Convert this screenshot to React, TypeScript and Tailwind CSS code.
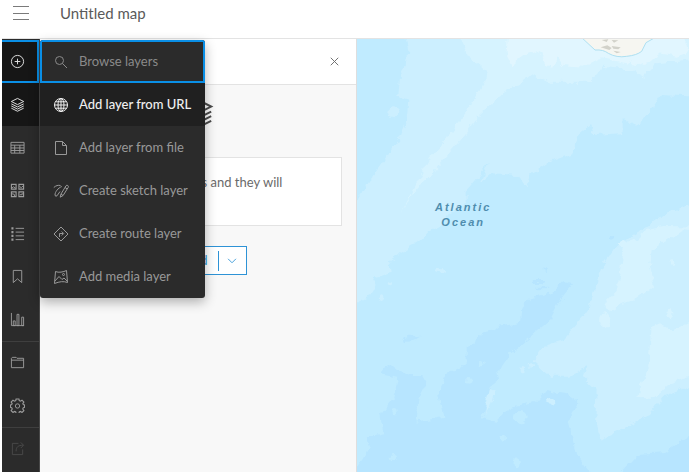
import type { ReactNode } from 'react'
import clsx from 'clsx'

function Icon({ children, className = 'size-4' }: { children: ReactNode; className?: string }) {
  return (
    <svg viewBox="0 0 16 16" fill="none" stroke="currentColor" className={clsx('shrink-0', className)} aria-hidden="true">
      {children}
    </svg>
  )
}

const icons = {
  plus: <><circle cx="8" cy="8" r="6.5" /><path d="M8 5v6M5 8h6" /></>,
  layers: <path d="M8 1.5 14.6 4.800 8 8.100 1.400 4.800ZM1.400 7.300 8 10.600l6.600-3.300M1.400 9.600 8 12.900l6.600-3.300M1.400 11.900 8 15.200l6.600-3.300" />,
  table: <path d="M1 2.500h14v11.500h-14zM1 5.500h14M1 8.500h14M1 11.200h14M5 5.500v8.500M10.500 5.500v8.500" />,
  basemap: (
    <>
      <path strokeWidth="1.2" d="M1.500 1.500h5v5h-5zM9.500 1.500h5v5h-5zM1.500 9.500h5v5h-5zM9.500 9.500h5v5h-5z" />
      <path d="m2 5.500 1.500-1.500L6 5.500M10 3.500 12 5l2-2M2 11.500l2.500.5.5 2M10.500 12.500h2.500v-2" />
    </>
  ),
  legend: (
    <>
      <path d="M6 2.500h9M6 6.500h9M6 10.500h9M6 14.500h9" />
      <path strokeWidth="2.200" d="M1.500 2.500h2.200M1.500 6.500h2.200M1.500 10.500h2.200M1.500 14.500h2.200" />
    </>
  ),
  bookmark: <path d="M3.500 1.500h9v13l-4.500-4-4.500 4z" />,
  charts: <path d="M1.500 1v13.500H15M3.500 9.500h2v5h-2zM7.500 2.500h2v12h-2zM12.500 5.500h2v9h-2z" />,
  folder: <path d="M1.500 13.500v-10l1-1h4l1 1h7v10zM1.500 5.500h13" />,
  gear: (
    <>
      <path
        strokeWidth="1.200"
        d="M6.500 1h3l.4 1.900 1.200.5 1.700-1.100 2 2-1.100 1.700.5 1.100 1.300.4v2.500l-1.400.5-.5 1.200 1.200 1.700-2 2-1.700-1.100-1.200.5-.4 1.700h-3l-.4-1.700-1.200-.5-1.700 1.100-2-2 1.200-1.700-.5-1.200-1.400-.5V7.500l1.300-.4.5-1.100-1.100-1.700 2-2 1.700 1.100 1.200-.5z"
      />
      <circle cx="8" cy="8.500" r="2.300" />
    </>
  ),
  share: <path d="M9 2.500H2.500v12h11V9M6.500 11c0-4.500 2-6.500 7.500-6.500M11.500 1.500l3 3-3 3" />,
  search: <><circle cx="6.500" cy="6.500" r="4" /><path d="m9.500 9.500 4.500 4.500" /></>,
  globe: (
    <>
      <circle cx="8" cy="8" r="6.500" />
      <ellipse cx="8" cy="8" rx="3" ry="6.500" />
      <path d="M8 1.500v13M1.500 8h13M2.500 4.800h11M2.500 11.200h11" />
    </>
  ),
  file: <path d="M2.500 1.500h7l4 4v9h-11zM9.500 1.500v4h4" />,
  sketch: (
    <>
      <path d="M7.200 14.200 8 11l5-8.200q.8-1 1.800-.3t.4 1.900l-5.100 8.100zM12 4.500l2 1.300M8 11l2.100 1.500" />
      <path d="M.8 4.500C3 2.500 5 2 7.500 2.500M8.800 3.500C5 5 2 9 2 12q.3 2 2 .8L7 8.500" />
    </>
  ),
  route: <path d="m8 1 7 7-7 7-7-7zM6.500 11V7.500h3.500M8.700 5.500l2 2-2 2" />,
  media: (
    <>
      <path d="M2.500 2.500c3 1.500 8 .5 11-1l1 12c-4-1.500-8-1-13 1z" />
      <path d="m2 12 4-4.500 3 3 2-1.500 3 3" />
      <circle cx="10.500" cy="5.500" r="1" />
    </>
  ),
  close: <path d="m4 4 8 8M12 4l-8 8" />,
  chevron: <path d="m3.500 5.500 4.500 4.500 4.500-4.500" />,
}

type IconName = keyof typeof icons

const toolGroups: { icon: IconName; label: string; disabled?: boolean }[][] = [
  [
    { icon: 'plus', label: 'Add' },
    { icon: 'layers', label: 'Layers' },
    { icon: 'table', label: 'Tables' },
    { icon: 'basemap', label: 'Basemap' },
    { icon: 'legend', label: 'Legend' },
    { icon: 'bookmark', label: 'Bookmarks' },
    { icon: 'charts', label: 'Charts' },
  ],
  [
    { icon: 'folder', label: 'Save and open' },
    { icon: 'gear', label: 'Map properties' },
  ],
  [{ icon: 'share', label: 'Share map', disabled: true }],
]

const menuItems: { icon: IconName; label: string }[] = [
  { icon: 'search', label: 'Browse layers' },
  { icon: 'globe', label: 'Add layer from URL' },
  { icon: 'file', label: 'Add layer from file' },
  { icon: 'sketch', label: 'Create sketch layer' },
  { icon: 'route', label: 'Create route layer' },
  { icon: 'media', label: 'Add media layer' },
]

function Toolbar() {
  return (
    <nav className="flex w-[38px] shrink-0 flex-col border-r border-[#484848] bg-[#2b2b2b] pt-px">
      {toolGroups.map((group, i) => (
        <div key={i} className={clsx('flex flex-col', i > 0 && 'shadow-[inset_0_1px_#3f3f3f]')}>
          {group.map((tool) => (
            <button
              key={tool.label}
              aria-label={tool.label}
              disabled={tool.disabled}
              className={clsx(
                'flex h-[43px] items-center pl-2',
                tool.label === 'Add' && 'border-y-2 border-r-2 border-[#0a8fe6] bg-[#161616] text-[#e6e6e6]',
                tool.label === 'Layers' && 'bg-[#161616] text-[#e6e6e6]',
                tool.disabled ? 'text-[#4a4a4a]' : 'text-[#9c9c9c]',
              )}
            >
              <Icon className="size-[15px]">{icons[tool.icon]}</Icon>
            </button>
          ))}
        </div>
      ))}
    </nav>
  )
}

function AddMenu() {
  return (
    <div role="menu" className="absolute top-px left-[38px] z-10 w-[165px] overflow-hidden rounded-[3px] bg-[#2b2b2b] shadow-[0_4px_12px_rgba(0,0,0,0.3)]">
      {menuItems.map((item, i) => (
        <button
          key={item.label}
          role="menuitem"
          className={clsx(
            'flex h-[43px] w-full items-center gap-2.5 pl-[13px] text-left text-[13px] whitespace-nowrap',
            i === 0 && 'text-[#8a8a8a] outline-2 -outline-offset-2 outline-[#0a8fe6]',
            i === 1 && 'bg-[#202020] font-medium text-[#f0f0f0]',
            i > 1 && 'text-[#999]',
          )}
        >
          <Icon>{icons[item.icon]}</Icon>
          {item.label}
        </button>
      ))}
    </div>
  )
}

function LayersPanel() {
  return (
    <aside aria-label="Layers" className="flex w-[317px] shrink-0 flex-col border-r border-[#dedede] bg-[#f8f8f8]">
      <div className="flex h-[46px] items-center justify-end border-b border-[#e3e3e3] bg-white pr-3.5">
        <button aria-label="Close" className="text-[#6a6a6a]">
          <Icon className="size-[15px]">{icons.close}</Icon>
        </button>
      </div>
      <div className="flex flex-col items-center px-3.5 pt-3">
        <Icon className="size-8 text-[#4a4a4a]">{icons.layers}</Icon>
        <p className="mt-7 h-[69px] w-full border border-[#e3e3e3] bg-white px-2.5 pt-3.5 text-[13px] leading-5 text-[#6a6a6a]">
          To get started, add layers and they will
        </p>
        <div className="mt-5 flex h-[29px] w-[97px] items-center border border-[#2e93d6] bg-white text-[13px] text-[#2e93d6]">
          <button className="flex flex-1 items-center justify-end gap-2 pr-2.5">
            <Icon className="size-3.5">{icons.plus}</Icon>
            Add
          </button>
          <button aria-label="More add options" className="flex h-5 w-7 items-center justify-center border-l border-[#2e93d6]">
            <Icon className="size-3.5">{icons.chevron}</Icon>
          </button>
        </div>
      </div>
    </aside>
  )
}

function OceanMap() {
  return (
    <main className="relative min-w-0 flex-1 overflow-hidden bg-[#c0ebff]">
      <svg viewBox="21 27 997 1299" preserveAspectRatio="xMinYMin slice" className="block size-full" aria-hidden="true">
        <defs>
          {/* roughens the depth contours */}
          <filter id="rough" x="-5%" y="-5%" width="110%" height="110%" colorInterpolationFilters="sRGB">
            <feTurbulence type="fractalNoise" baseFrequency="0.04" numOctaves="3" seed="4" />
            <feDisplacementMap in="SourceGraphic" scale="24" xChannelSelector="R" yChannelSelector="G" />
          </filter>
        </defs>
        <g filter="url(#rough)">
          <g fill="#ccefff">
            <path d="M160 0 175 60 170 110 150 140 145 200 175 210 170 270 150 320 110 380 60 450 0 545V825L60 795 80 765 65 740 125 725 120 690 180 650 215 630 240 600 280 580 300 550 350 520 350 480 420 395 385 465 430 430 500 435 530 475 550 430 600 395 670 370 680 320 720 285 735 315 815 310 815 265 860 285 890 260 930 195 1050 200V0Z" />
            <path d="M1050 515 960 545 890 590 840 620 800 650 760 700 740 750 720 830 700 860 640 930 590 945 550 995 600 1040 660 1040 710 1010 700 1040 740 1080 735 1180 755 1235 800 1200 900 1155 940 1100 1050 1055Z" />
          </g>
          <g fill="#d6f3ff">
            <path d="M315 0 355 80 410 125 405 155 350 240 290 325 240 385 200 460 150 555 190 490 250 425 340 320 390 255 460 190 540 135 600 155 720 155 760 110 850 120 880 140 920 100 1050 85V0Z" />
            <path d="M1050 608 1000 600 950 630 905 660 900 710 915 765 890 785 850 815 810 825 780 845 765 815 800 780 810 740 820 670 800 640 860 630 900 595 940 588 1050 590Z" />
            <path d="M905 890 930 880 970 900 1050 860V1030L960 1060 910 1105 865 1100 870 1070 895 1010 900 940Z" />
            <ellipse cx="764" cy="871" rx="17" ry="24" />
            <ellipse cx="961" cy="853" rx="9" ry="15" />
            <circle cx="966" cy="698" r="7" />
          </g>
          <path fill="#e1f6ff" d="M475 0 470 70 490 110 510 80 570 60 590 105 610 110 620 80 640 105 700 110 750 85 860 105 900 95 930 70 980 80 1018 65 990 0Z" />
          <g fill="#b7e5ff">
            <path d="M0 1350 60 1250 50 1220 100 1210 90 1150 130 1100 145 1040 90 1030 110 1005 180 1035 215 1035 230 1060 205 1110 200 1175 280 1160 265 1090 300 1020 350 1005 350 950 400 915 440 890 510 880 515 830 540 805 600 790 640 750 660 775 625 820 600 870 540 920 480 970 445 1020 450 1045 425 1065 395 1165 440 1175 480 1130 560 1115 590 1080 650 1090 685 1115 655 1170 680 1280 735 1350Z" />
            <path d="M1050 1200 1000 1230 940 1270 860 1275 790 1350H1050Z" />
            <path d="M160 928 175 920H210L195 930 165 937Z" />
            <path d="M548 750 585 750 575 760 550 758ZM555 770H600L590 778H560ZM580 718 592 722 585 730ZM650 760 675 763 655 770Z" />
            <circle cx="783" cy="622" r="7" />
          </g>
          <g fill="#c0ebff">
            <circle cx="358" cy="1054" r="10" />
            <circle cx="393" cy="1001" r="8" />
            <circle cx="461" cy="1225" r="10" />
            <ellipse cx="511" cy="1160" rx="19" ry="17" />
            <circle cx="130" cy="1283" r="8" />
            <circle cx="135" cy="1142" r="8" />
            <ellipse cx="503" cy="1300" rx="9" ry="16" />
            <path d="M70 1090 85 1160 60 1180 45 1150Z" />
          </g>
          <g fill="#ccefff">
            <ellipse cx="605" cy="1112" rx="17" ry="9" />
            <path d="M420 1080 432 1085 420 1130 402 1155Z" />
            <ellipse cx="272" cy="722" rx="16" ry="8" />
            <circle cx="130" cy="247" r="15" />
            <circle cx="517" cy="1019" r="8" />
            <circle cx="541" cy="1008" r="8" />
            <circle cx="120" cy="762" r="7" />
            <circle cx="93" cy="800" r="7" />
          </g>
        </g>
        <path d="M692 20 735 60Q760 58 775 70Q800 84 830 79Q860 76 875 64L888 38 920 20Z" fill="#f6f6f1" stroke="#aee0f2" strokeWidth="3" />
        <path d="M755 30 775 28 770 36ZM752 52 772 46 785 54 778 60ZM785 48 812 52 805 58 790 56ZM790 62 812 66 800 70ZM785 30 805 31 792 38Z" fill="#d2d2ca" />
      </svg>
      <p className="absolute top-[161px] left-[78px] text-center font-['Liberation_Sans',sans-serif] text-[11px] leading-[15px] font-bold tracking-[2px] text-[#4f8dae] italic">
        Atlantic
        <br />
        Ocean
      </p>
    </main>
  )
}

export default function App() {
  return (
    <div className="flex h-screen flex-col bg-white pr-px pb-px pl-0.5 font-[Lato,sans-serif]">
      <header className="flex h-[39px] shrink-0 items-center border-b border-[#e3e3e3] pb-3 pl-2.5">
        <button aria-label="Menu" className="text-[#7a7a7a]">
          <svg viewBox="0 0 18 16" fill="none" stroke="currentColor" className="h-4 w-[18px]">
            <path d="M1 1.500h16M1 8.500h16M1 14.500h16" />
          </svg>
        </button>
        <h1 className="ml-[30px] text-[15px] text-[#5a5a5a]">Untitled map</h1>
      </header>
      <div className="relative flex min-h-0 flex-1">
        <Toolbar />
        <LayersPanel />
        <OceanMap />
        <AddMenu />
      </div>
    </div>
  )
}
